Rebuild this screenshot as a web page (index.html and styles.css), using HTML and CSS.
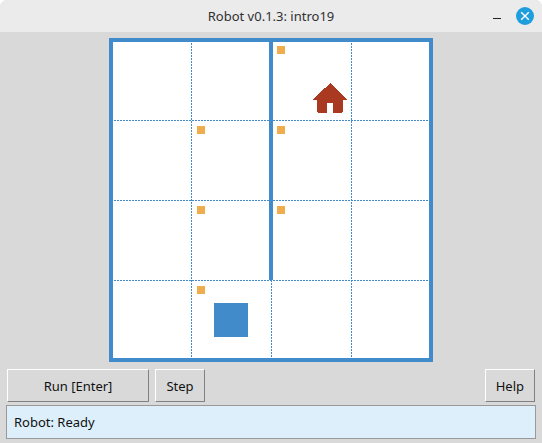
FILE: index.html
```html
<!DOCTYPE html>
<html lang="en">
<head>
    <meta charset="utf-8">
    <title>Robot v0.1.3: intro19</title>
    <link rel="stylesheet" href="styles.css">
</head>
<body>
    <div class="window">
        <header class="titlebar">
            <h1>Robot v0.1.3: intro19</h1>
            <div class="window-buttons">
                <button class="minimize" aria-label="Minimize"></button>
                <button class="close" aria-label="Close">
                    <svg width="18" height="18" viewBox="0 0 18 18">
                        <circle cx="9" cy="9" r="9" fill="#1f9ede"/>
                        <path d="M5.2 5.2L12.8 12.8M12.8 5.2L5.2 12.8" stroke="#fff" stroke-width="1.4"/>
                    </svg>
                </button>
            </div>
        </header>
        <main>
            <svg class="field" width="324" height="324" viewBox="0 0 324 324" shape-rendering="crispEdges">
                <rect width="324" height="324" fill="#fff"/>
                <!-- cell grid -->
                <path class="grid" d="M5 82.5H320M5 162.5H320M5 242.5H320"/>
                <path class="grid" d="M82.5 5V320M162.5 5V320M242.5 5V320"/>
                <!-- walls -->
                <path class="wall" d="M2 2H322V322H2ZM162 2V242"/>
                <!-- marked cells -->
                <g class="mark">
                    <rect x="168" y="8" width="8" height="8"/>
                    <rect x="88" y="88" width="8" height="8"/>
                    <rect x="168" y="88" width="8" height="8"/>
                    <rect x="88" y="168" width="8" height="8"/>
                    <rect x="168" y="168" width="8" height="8"/>
                    <rect x="88" y="248" width="8" height="8"/>
                </g>
                <!-- home -->
                <path class="home" d="M221 45.4H222L238 61V62H234V74H233V75H224V65H218V75H209V74H208V62H204V61Z"/>
                <!-- robot -->
                <rect class="robot" x="105" y="265" width="34" height="34"/>
            </svg>
            <div class="toolbar">
                <button class="button run">Run [Enter]</button>
                <button class="button">Step</button>
                <button class="button help">Help</button>
            </div>
            <div class="status" role="status">Robot: Ready</div>
        </main>
    </div>
</body>
</html>
```

FILE: styles.css
```css
* {
    box-sizing: border-box;
}

body {
    margin: 0;
    background: #fff;
    color: #111;
    font: 13px/18px "Noto Sans", sans-serif;
    cursor: default;
}

button {
    color: inherit;
    font: inherit;
}

.window {
    display: flex;
    flex-direction: column;
    min-height: 100vh;
    background: #d9d9d9;
    border-radius: 7px 7px 0 0;
    overflow: hidden;
}

.titlebar {
    display: grid;
    grid-template-columns: 1fr auto 1fr;
    align-items: center;
    height: 32px;
    padding: 0 8px;
    background: #ebebec;
}

.titlebar h1 {
    grid-column: 2;
    margin: 0;
    color: #303030;
    font-size: 13px;
    font-weight: 400;
}

.window-buttons {
    display: flex;
    justify-content: flex-end;
    gap: 15px;
}

.window-buttons button {
    display: flex;
    padding: 0;
    border: 0;
    background: none;
}

.window-buttons .minimize {
    align-self: center;
    width: 8px;
    height: 6px;
    border-bottom: 1px solid #222;
}

main {
    display: flex;
    flex: 1;
    flex-direction: column;
    padding: 6px;
}

.field {
    align-self: center;
}

.grid {
    fill: none;
    stroke: #428bca;
    stroke-dasharray: 2 1;
}

.wall {
    fill: none;
    stroke: #428bca;
    stroke-width: 4;
}

.mark {
    fill: #f0ad4e;
}

.home {
    fill: #a93a21;
}

.robot {
    fill: #428bca;
}

.toolbar {
    display: flex;
    gap: 6px;
    margin: 7px 1px 3px;
}

.button {
    min-width: 50px;
    height: 33px;
    padding: 0 10px;
    border: 1px solid;
    border-color: #fff #828282 #828282 #fff;
    border-radius: 0;
    background: #d9d9d9;
}

.run {
    width: 142px;
}

.help {
    margin-left: auto;
}

.status {
    padding: 7px;
    border: 1px solid #999;
    background: #dceffa;
}
```
